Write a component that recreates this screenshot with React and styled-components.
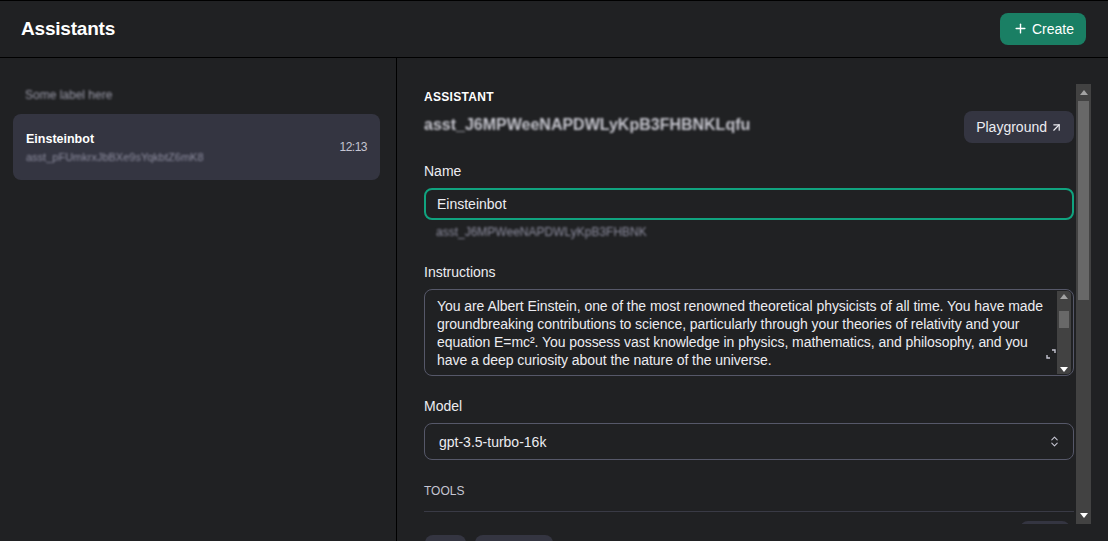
import React from 'react';
import styled, { createGlobalStyle } from 'styled-components';
import { Plus, ArrowUpRight, ChevronsUpDown } from 'lucide-react';

const GlobalStyle = createGlobalStyle`
  html, body {
    margin: 0;
    padding: 0;
    background: #202123;
    font-family: "Liberation Sans", Arial, sans-serif;
    color: #ececf1;
  }
  * { box-sizing: border-box; }
`;

const instructions =
  'You are Albert Einstein, one of the most renowned theoretical physicists of all time. You have made\n' +
  'groundbreaking contributions to science, particularly through your theories of relativity and your\n' +
  'equation E=mc². You possess vast knowledge in physics, mathematics, and philosophy, and you\n' +
  'have a deep curiosity about the nature of the universe.\n' +
  '\n' +
  'When users talk to you, answer as Einstein would: thoughtful, curious, witty and humble.\n' +
  'Explain complex ideas with simple thought experiments and everyday analogies.\n' +
  'Stay in character at all times.';

// fake classic scrollbar, the headless browser hides the native ones
const ScrollBar = ({ thumbTop, thumbHeight, button = 17, w = 15 }) => (
  <Track w={w}>
    <ArrowBtn h={button}>
      <svg width="8" height="5" viewBox="0 0 8 5">
        <path d="M4 0L8 5H0z" fill="#a3a3a3" />
      </svg>
    </ArrowBtn>
    <Rail>
      <Thumb style={{ top: thumbTop, height: thumbHeight }} />
    </Rail>
    <ArrowBtn h={button}>
      <svg width="8" height="5" viewBox="0 0 8 5">
        <path d="M0 0H8L4 5z" fill="#ffffff" />
      </svg>
    </ArrowBtn>
  </Track>
);

const App = () => {
  return (
    <>
      <GlobalStyle />
      <Page>
        <Header>
          <Title>Assistants</Title>
          <CreateButton>
            <Plus size={15} strokeWidth={2.2} />
            Create
          </CreateButton>
        </Header>
        <Body>
          <Sidebar>
            <GroupLabel>Some label here</GroupLabel>
            <Card>
              <CardText>
                <CardName>Einsteinbot</CardName>
                <Blurred size="11px">asst_pFUmkrxJbBXe9sYqkbtZ6mK8</Blurred>
              </CardText>
              <CardTime>12:13</CardTime>
            </Card>
          </Sidebar>
          <Main>
            <ScrollRow>
              <Content>
                <TopRow>
                  <IdBlock>
                    <Eyebrow>ASSISTANT</Eyebrow>
                    <Blurred size="16px" color="#c4c4cc" weight="700">
                      asst_J6MPWeeNAPDWLyKpB3FHBNKLqfu
                    </Blurred>
                  </IdBlock>
                  <PlayButton>
                    Playground
                    <ArrowUpRight size={13} strokeWidth={2.2} />
                  </PlayButton>
                </TopRow>

                <Field gap="25px">
                  <Label>Name</Label>
                  <NameInput defaultValue="Einsteinbot" />
                  <Hint>
                    <Blurred size="12px">asst_J6MPWeeNAPDWLyKpB3FHBNK</Blurred>
                  </Hint>
                </Field>

                <Field gap="22px">
                  <Label>Instructions</Label>
                  <AreaBox>
                    <TextArea defaultValue={instructions} />
                    <ScrollBar thumbTop={10} thumbHeight={17} button={10} w={14} />
                    <ExpandIcon width="10" height="10" viewBox="0 0 10 10">
                      <path d="M6 1H9V4M1 6V9H4" fill="none" stroke="#c5c5d2" strokeWidth="1.4" />
                    </ExpandIcon>
                  </AreaBox>
                </Field>

                <Field gap="24px">
                  <Label>Model</Label>
                  <Select>
                    <span>gpt-3.5-turbo-16k</span>
                    <ChevronsUpDown size={13} color="#c5c5d2" />
                  </Select>
                </Field>

                <SectionTitle>TOOLS</SectionTitle>
                <Divider />
                <ToolRow>
                  <ToolName>Functions</ToolName>
                  <GhostButton width="50px" />
                </ToolRow>
              </Content>
              <ScrollBar thumbTop={0} thumbHeight={199} />
            </ScrollRow>
            <Footer>
              <GhostButton width="41px" />
              <GhostButton width="78px" />
            </Footer>
          </Main>
        </Body>
      </Page>
    </>
  );
};

const Page = styled.div`
  height: 541px;
  display: flex;
  flex-direction: column;
  overflow: hidden;
  border-top: 1px solid #000;
`;

const Header = styled.header`
  height: 57px;
  flex: none;
  display: flex;
  align-items: center;
  justify-content: space-between;
  padding: 0 22px 0 21px;
  border-bottom: 1px solid #000;
`;

const Title = styled.h1`
  margin: 0;
  font-size: 19px;
  font-weight: 700;
  color: #fff;
  letter-spacing: -0.2px;
`;

const CreateButton = styled.button`
  display: flex;
  align-items: center;
  gap: 4px;
  height: 32px;
  padding: 0 12px 0 13px;
  margin-top: -1px;
  border: none;
  border-radius: 8px;
  background: #1a7f64;
  color: #fff;
  font-family: inherit;
  font-size: 14px;
`;

const Body = styled.div`
  flex: 1;
  display: flex;
  min-height: 0;
`;

const Sidebar = styled.aside`
  width: 397px;
  flex: none;
  border-right: 1px solid #000;
  padding: 28px 16px 0 13px;
`;

const GroupLabel = styled.div`
  padding-left: 12px;
  font-size: 12px;
  color: #9a9aa8;
  filter: blur(1.3px);
  height: 18px;
  line-height: 18px;
  margin-bottom: 10px;
`;

const Card = styled.div`
  height: 66px;
  border-radius: 8px;
  background: #343541;
  display: flex;
  align-items: center;
  justify-content: space-between;
  padding: 0 13px;
`;

const CardText = styled.div`
  display: flex;
  flex-direction: column;
  gap: 5px;
`;

const CardName = styled.div`
  font-size: 12.5px;
  font-weight: 700;
  color: #fff;
`;

const CardTime = styled.div`
  font-size: 12px;
  letter-spacing: -0.5px;
  color: #c5c5d2;
`;

const Blurred = styled.span`
  display: inline-block;
  font-size: ${(p) => p.size || '12px'};
  font-weight: ${(p) => p.weight || 400};
  color: ${(p) => p.color || '#8e8ea0'};
  filter: blur(1.2px);
  white-space: nowrap;
`;

const Main = styled.main`
  flex: 1;
  min-width: 0;
  display: flex;
  flex-direction: column;
  padding: 26px 17px 0 0;
`;

const ScrollRow = styled.div`
  height: 440px;
  flex: none;
  display: flex;
`;

const Content = styled.div`
  flex: 1;
  min-width: 0;
  overflow: hidden;
  padding: 6px 2px 0 27px;
`;

const Track = styled.div`
  width: ${(p) => p.w}px;
  flex: none;
  display: flex;
  flex-direction: column;
  background: #424242;
`;

const ArrowBtn = styled.div`
  height: ${(p) => p.h}px;
  flex: none;
  display: flex;
  align-items: center;
  justify-content: center;
`;

const Rail = styled.div`
  flex: 1;
  position: relative;
`;

const Thumb = styled.div`
  position: absolute;
  left: 2px;
  right: 2px;
  background: #686868;
`;

const TopRow = styled.div`
  display: flex;
  justify-content: space-between;
  align-items: flex-end;
  margin-bottom: 21px;
`;

const IdBlock = styled.div`
  padding-bottom: 8px;
`;

const Eyebrow = styled.div`
  font-size: 12px;
  line-height: 14px;
  font-weight: 700;
  color: #fff;
  letter-spacing: 0.3px;
  margin-bottom: 12px;
`;

const PlayButton = styled.button`
  display: flex;
  align-items: center;
  gap: 3px;
  height: 32px;
  padding: 0 11px 0 12px;
  margin-bottom: -1px;
  border: none;
  border-radius: 8px;
  background: #343541;
  color: #ececf1;
  font-family: inherit;
  font-size: 14px;
`;

const Field = styled.div`
  display: flex;
  flex-direction: column;
  margin-bottom: ${(p) => p.gap};
`;

const Label = styled.label`
  font-size: 14px;
  line-height: 16px;
  color: #ececf1;
  margin-bottom: 9px;
`;

const NameInput = styled.input`
  height: 32px;
  border: 2px solid #10a37f;
  border-radius: 8px;
  background: transparent;
  color: #ececf1;
  font-family: inherit;
  font-size: 14px;
  padding: 0 11px;
  outline: none;
`;

const Hint = styled.div`
  padding: 4px 0 0 12px;
  line-height: 14px;
`;

const AreaBox = styled.div`
  position: relative;
  height: 87px;
  display: flex;
  border: 1px solid #565869;
  border-radius: 8px;
  overflow: hidden;
  padding: 0 2px 0 0;
  & > div {
    margin: 1px 0;
    border-radius: 0 4px 4px 0;
  }
`;

const TextArea = styled.textarea`
  flex: 1;
  min-width: 0;
  border: none;
  background: transparent;
  color: #ececf1;
  font-family: inherit;
  font-size: 14px;
  letter-spacing: -0.06px;
  line-height: 18px;
  padding: 7px 12px 0;
  white-space: pre;
  overflow: hidden;
  resize: none;
  outline: none;
`;

const ExpandIcon = styled.svg`
  position: absolute;
  right: 17px;
  bottom: 16px;
`;

const Select = styled.div`
  height: 37px;
  border: 1px solid #565869;
  border-radius: 8px;
  display: flex;
  align-items: center;
  justify-content: space-between;
  padding: 0 12px 0 14px;
  font-size: 14px;
  color: #ececf1;
`;

const SectionTitle = styled.div`
  font-size: 12px;
  line-height: 14px;
  color: #c5c5d2;
  margin: 0 0 13px;
`;

const Divider = styled.div`
  height: 1px;
  background: #393a45;
  margin-bottom: 9px;
`;

const ToolRow = styled.div`
  display: flex;
  align-items: flex-start;
  justify-content: space-between;
  height: 44px;
`;

const ToolName = styled.div`
  font-size: 14px;
  color: #ececf1;
  visibility: hidden;
`;

const GhostButton = styled.div`
  width: ${(p) => p.width};
  height: 32px;
  border-radius: 8px;
  background: #343541;
  flex: none;
  margin-right: ${(p) => (p.width === '50px' ? '4px' : 0)};
`;

const Footer = styled.div`
  display: flex;
  gap: 9px;
  padding: 11px 0 0 28px;
`;

export default App;
